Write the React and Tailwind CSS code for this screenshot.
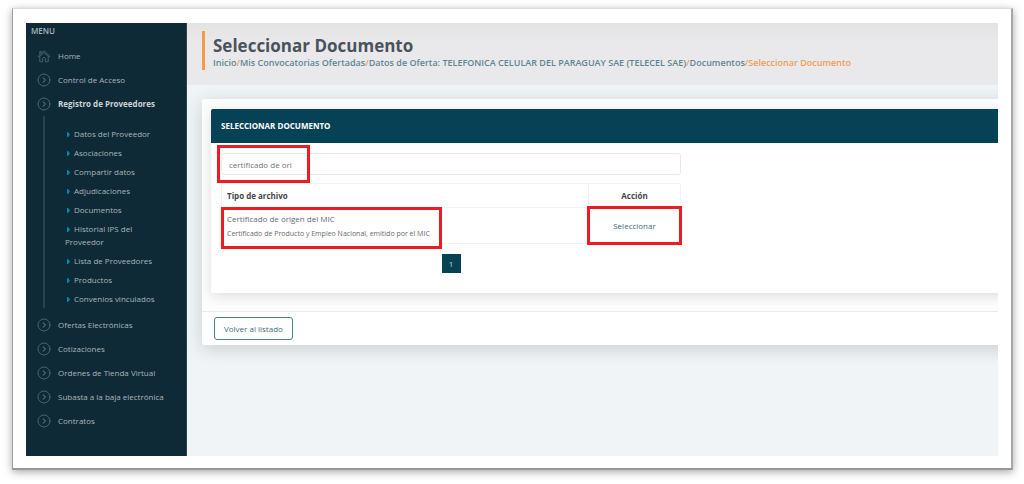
import React, { useState } from 'react';
import { clsx } from 'clsx';

const PROVIDER_LINKS = [
    'Datos del Proveedor',
    'Asociaciones',
    'Compartir datos',
    'Adjudicaciones',
    'Documentos',
    'Historial IPS del Proveedor',
    'Lista de Proveedores',
    'Productos',
    'Convenios vinculados',
];

const MENU = [
    { label: 'Home', home: true },
    { label: 'Control de Acceso' },
    { label: 'Registro de Proveedores', active: true, children: PROVIDER_LINKS },
    { label: 'Ofertas Electrónicas' },
    { label: 'Cotizaciones' },
    { label: 'Ordenes de Tienda Virtual' },
    { label: 'Subasta a la baja electrónica' },
    { label: 'Contratos' },
];

const CRUMBS = [
    'Inicio',
    'Mis Convocatorias Ofertadas',
    'Datos de Oferta: TELEFONICA CELULAR DEL PARAGUAY SAE (TELECEL SAE)',
    'Documentos',
];

const HomeIcon = () => (
    <svg viewBox="0 0 14 14" className="w-[14px] h-[14px] shrink-0 text-[#4b606a]" fill="none" stroke="currentColor" strokeWidth="1" strokeLinejoin="round">
        <path d="M1.2 7.2 7 1.8l5.8 5.4-.9.8L7 3.5 2.1 8z" />
        <path d="M2.8 7.8v5h2.8V9.6c0-.7.6-1.2 1.4-1.2s1.4.5 1.4 1.2v3.2h2.8v-5M2.8 5.4V2.6h1.4v1.5" />
    </svg>
);

const CircleChevron = () => (
    <svg viewBox="0 0 14 14" className="w-[14px] h-[14px] shrink-0 text-[#4f646e]" fill="none" stroke="currentColor" strokeWidth="1" strokeLinecap="round" strokeLinejoin="round">
        <circle cx="7" cy="7" r="6" />
        <path d="M6.2 4.9 8.3 7 6.2 9.1" strokeWidth="1.2" />
    </svg>
);

const Sidebar = () => (
    <nav className="w-[161px] shrink-0 bg-[#0e2a36] text-[#a9b5ba] border-r border-[#2d4650]" aria-label="Menu">
        <p className="h-[21px] pl-[5px] pt-[2px] text-[8px] leading-[12px] font-semibold">MENU</p>
        <ul>
            {MENU.map(({ label, home, active, children }) => (
                <li key={label}>
                    <a href="#" className={clsx('flex items-center gap-[7px] h-6 pl-[11px] text-[8px]', active && 'font-bold text-[#cbd3d6]')}>
                        {home ? <HomeIcon /> : <CircleChevron />}
                        {label}
                    </a>
                    {children && (
                        <ul className="ml-[17px] mb-[5px] pl-5 pr-6 pt-2 border-l-2 border-[#2a424d]">
                            {children.map((item) => (
                                <li key={item} className="py-[3px] text-[8px] leading-[13px]">
                                    <a href="#">
                                        <svg viewBox="0 0 3 5" className="inline-block w-[3px] h-[5px] ml-[2px] mr-1 align-baseline text-[#0b84ad]" fill="currentColor">
                                            <path d="M0 0h1L3 2.5 1 5H0z" />
                                        </svg>
                                        {item}
                                    </a>
                                </li>
                            ))}
                        </ul>
                    )}
                </li>
            ))}
        </ul>
    </nav>
);

const PageHeader = () => (
    <header className="h-[62px] pt-2 pl-[15px] bg-linear-to-b from-[#e3e3e3] to-[#e9e9eb] to-30%">
        <div className="h-[39px] pl-2 pt-[4px] border-l-[3px] border-[#f7994a]">
            <h1 className="text-[17px] leading-[22px] font-bold text-[#4a535b]">Seleccionar Documento</h1>
            <div className="text-[9px] leading-[12px] font-semibold text-[#5c8792] whitespace-nowrap">
                {CRUMBS.map((crumb) => (
                    <React.Fragment key={crumb}>
                        <a href="#">{crumb}</a>
                        <span className="text-[#f39a55]">/</span>
                    </React.Fragment>
                ))}
                <span className="text-[#f39a55]">Seleccionar Documento</span>
            </div>
        </div>
    </header>
);

const Highlight = ({ className }) => (
    <span className={clsx('absolute border-[3px] border-[#ed1c24] pointer-events-none', className)} />
);

const DocumentPicker = () => {
    const [query, setQuery] = useState('certificado de ori');

    return (
        <section className="-mr-6 rounded-l-[3px] bg-white shadow-[0_3px_14px_rgba(0,0,0,0.13)]">
            <h2 className="h-[34px] flex items-center pl-[10px] rounded-tl-[2px] bg-[#064256] text-white text-[8px] font-bold">
                SELECCIONAR DOCUMENTO
            </h2>
            <div className="pl-[10px] pt-[10px] pb-5">
                <div className="w-[460px]">
                    <div className="relative">
                        <input
                            type="text"
                            aria-label="Buscar tipo de archivo"
                            value={query}
                            onChange={(e) => setQuery(e.target.value)}
                            className="block w-full h-[22px] px-[7px] rounded-[3px] border border-[#e6e8ea] text-[8px] text-[#6f757a]"
                        />
                        <Highlight className="-left-1 -top-2 w-[93px] h-[38px]" />
                    </div>
                    <table className="w-full mt-2 table-fixed border-collapse text-[#666b70]">
                        <thead>
                            <tr className="h-6 text-[8px] text-[#41474d]">
                                <th className="border border-[#f2f3f4] pl-[5px] text-left font-bold">Tipo de archivo</th>
                                <th className="w-[92px] border border-[#f2f3f4] text-center font-bold">Acción</th>
                            </tr>
                        </thead>
                        <tbody>
                            <tr className="h-9">
                                <td className="relative border border-[#f2f3f4] pl-[5px]">
                                    <p className="text-[8px] leading-[16px]">Certificado de origen del MIC</p>
                                    <p className="text-[7px] leading-[14px]">Certificado de Producto y Empleo Nacional, emitido por el MIC</p>
                                    <Highlight className="-left-px -top-px w-[221px] h-[42px]" />
                                </td>
                                <td className="relative border border-[#f2f3f4] text-center">
                                    <button type="button" className="block mx-auto text-[8px] leading-[12px] text-[#3f6b7b]">Seleccionar</button>
                                    <Highlight className="-inset-x-[2px] -inset-y-[2px]" />
                                </td>
                            </tr>
                        </tbody>
                    </table>
                    <div className="flex justify-center mt-[10px]">
                        <button type="button" aria-current="page" className="w-[19px] h-[19px] bg-[#064256] text-[#c4d3d9] text-[8px]">1</button>
                    </div>
                </div>
            </div>
        </section>
    );
};

export default function App() {
    return (
        <div className="min-h-screen flex flex-col bg-white pt-2 pr-[11px] pb-[14px] pl-[12px] font-['Open_Sans','Noto_Sans',sans-serif]">
            <div className="grow flex px-[13px] pt-[14px] pb-[12px] bg-white border-t border-t-[#dcdcdc] border-l border-l-[#a0a0a0] border-r-2 border-r-[#a8a8a8] border-b-2 border-b-[#989898] shadow-[0_2px_8px_rgba(0,0,0,0.35)]">
                <div className="grow min-w-0 flex overflow-hidden">
                    <Sidebar />
                    <div className="grow min-w-0 overflow-hidden bg-[#f0f4f7]">
                        <PageHeader />
                        <main className="-mr-6 pl-[15px] pt-[14px]">
                            <div className="rounded-l-[3px] bg-[#fdfdfd] shadow-[0_4px_18px_rgba(0,0,0,0.16)]">
                                <div className="pl-[9px] pt-[10px] pb-[18px] overflow-hidden">
                                    <DocumentPicker />
                                </div>
                                <div className="border-t border-[#e8e9ea] bg-white rounded-bl-[3px] pl-3 py-[5px]">
                                    <button type="button" className="block h-[23px] px-[9px] rounded-[3px] border border-[#4f7e8c] text-[8px] text-[#3f6b7b]">
                                        Volver al listado
                                    </button>
                                </div>
                            </div>
                        </main>
                    </div>
                </div>
            </div>
        </div>
    );
}
